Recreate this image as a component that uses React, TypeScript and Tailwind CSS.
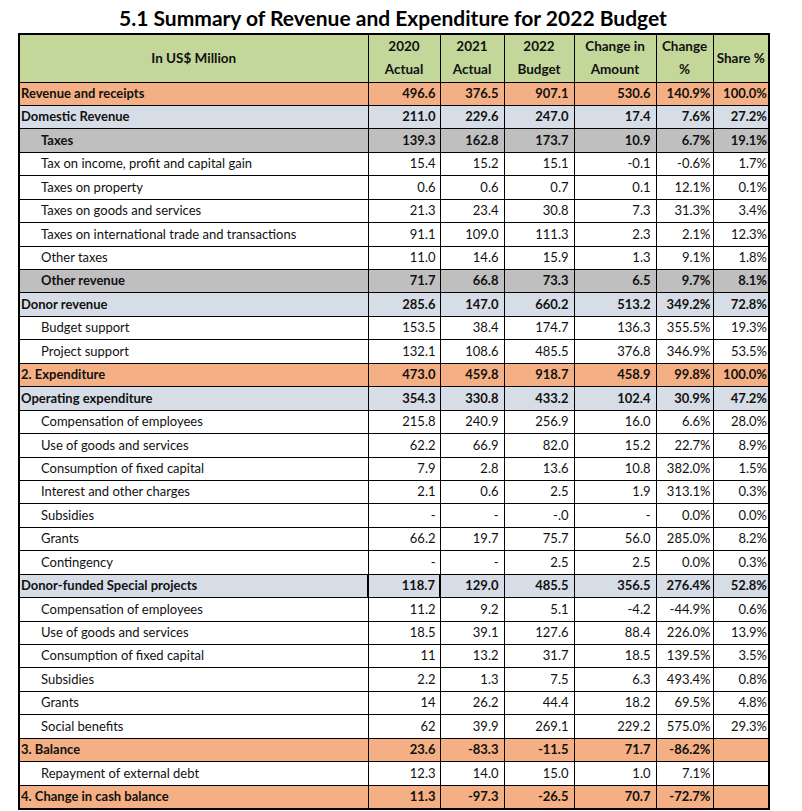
import React from 'react'

type Tone = 'o' | 'b' | 'g' | 'w'

interface Row {
  label: string
  tone: Tone
  indent: boolean
  values: string[]
  thick?: boolean
}

const bold = (label: string, tone: Tone, values: string[], indent = false): Row => ({ label, tone, indent, values })
const item = (label: string, values: string[]): Row => ({ label, tone: 'w', indent: true, values })

const rows: Row[] = [
  bold('Revenue and receipts', 'o', ['496.6', '376.5', '907.1', '530.6', '140.9%', '100.0%']),
  bold('Domestic Revenue', 'b', ['211.0', '229.6', '247.0', '17.4', '7.6%', '27.2%']),
  bold('Taxes', 'g', ['139.3', '162.8', '173.7', '10.9', '6.7%', '19.1%'], true),
  item('Tax on income, profit and capital gain', ['15.4', '15.2', '15.1', '-0.1', '-0.6%', '1.7%']),
  item('Taxes on property', ['0.6', '0.6', '0.7', '0.1', '12.1%', '0.1%']),
  item('Taxes on goods and services', ['21.3', '23.4', '30.8', '7.3', '31.3%', '3.4%']),
  item('Taxes on international trade and transactions', ['91.1', '109.0', '111.3', '2.3', '2.1%', '12.3%']),
  item('Other taxes', ['11.0', '14.6', '15.9', '1.3', '9.1%', '1.8%']),
  bold('Other revenue', 'g', ['71.7', '66.8', '73.3', '6.5', '9.7%', '8.1%'], true),
  bold('Donor revenue', 'b', ['285.6', '147.0', '660.2', '513.2', '349.2%', '72.8%']),
  item('Budget support', ['153.5', '38.4', '174.7', '136.3', '355.5%', '19.3%']),
  item('Project support', ['132.1', '108.6', '485.5', '376.8', '346.9%', '53.5%']),
  bold('2. Expenditure', 'o', ['473.0', '459.8', '918.7', '458.9', '99.8%', '100.0%']),
  bold('Operating expenditure', 'b', ['354.3', '330.8', '433.2', '102.4', '30.9%', '47.2%']),
  item('Compensation of employees', ['215.8', '240.9', '256.9', '16.0', '6.6%', '28.0%']),
  item('Use of goods and services', ['62.2', '66.9', '82.0', '15.2', '22.7%', '8.9%']),
  item('Consumption of fixed capital', ['7.9', '2.8', '13.6', '10.8', '382.0%', '1.5%']),
  item('Interest and other charges', ['2.1', '0.6', '2.5', '1.9', '313.1%', '0.3%']),
  item('Subsidies', ['-', '-', '-.0', '-', '0.0%', '0.0%']),
  item('Grants', ['66.2', '19.7', '75.7', '56.0', '285.0%', '8.2%']),
  item('Contingency', ['-', '-', '2.5', '2.5', '0.0%', '0.3%']),
  { ...bold('Donor-funded Special projects', 'b', ['118.7', '129.0', '485.5', '356.5', '276.4%', '52.8%']), thick: true },
  item('Compensation of employees', ['11.2', '9.2', '5.1', '-4.2', '-44.9%', '0.6%']),
  item('Use of goods and services', ['18.5', '39.1', '127.6', '88.4', '226.0%', '13.9%']),
  item('Consumption of fixed capital', ['11', '13.2', '31.7', '18.5', '139.5%', '3.5%']),
  item('Subsidies', ['2.2', '1.3', '7.5', '6.3', '493.4%', '0.8%']),
  item('Grants', ['14', '26.2', '44.4', '18.2', '69.5%', '4.8%']),
  item('Social benefits', ['62', '39.9', '269.1', '229.2', '575.0%', '29.3%']),
  bold('3. Balance', 'o', ['23.6', '-83.3', '-11.5', '71.7', '-86.2%', '']),
  item('Repayment of external debt', ['12.3', '14.0', '15.0', '1.0', '7.1%', '']),
  bold('4. Change in cash balance', 'o', ['11.3', '-97.3', '-26.5', '70.7', '-72.7%', '']),
]

const toneBg: Record<Tone, string> = {
  o: 'bg-[#f4b084]',
  b: 'bg-[#d7dde6]',
  g: 'bg-[#bfbfbf]',
  w: 'bg-white',
}

// right padding per numeric column, as in the sheet
const padR = ['pr-[4px]', 'pr-[5px]', 'pr-[5px]', 'pr-[5px]', 'pr-[2px]', 'pr-[1px]']

export default function App() {
  return (
    <div className="w-[802px] h-[811px] bg-white text-[#111] overflow-hidden" style={{ fontFamily: 'Lato, "Open Sans", sans-serif' }}>
      <div className="ml-[18px] w-[750px]">
        <h1 className="h-[33px] pt-[5px] text-center text-[21px] font-bold leading-[26px] text-black">
          5.1 Summary of Revenue and Expenditure for 2022 Budget
        </h1>

        <table className="w-[750px] table-fixed border-collapse border-2 border-black text-[13px]">
          <colgroup>
            <col className="w-[349px]" />
            <col className="w-[72px]" />
            <col className="w-[64px]" />
            <col className="w-[70px]" />
            <col className="w-[82px]" />
            <col className="w-[57px]" />
            <col className="w-[56px]" />
          </colgroup>
          <thead>
            <tr className="h-[48px] bg-[#c4d79b] font-bold leading-[23px] text-[13.5px]">
              <th className="border border-black font-bold">In US$ Million</th>
              <th className="border border-black font-bold">2020<br />Actual</th>
              <th className="border border-black font-bold">2021<br />Actual</th>
              <th className="border border-black font-bold">2022<br />Budget</th>
              <th className="border border-black font-bold">Change in<br />Amount</th>
              <th className="border border-black font-bold">Change<br />%</th>
              <th className="border border-black font-bold">Share %</th>
            </tr>
          </thead>
          <tbody>
            {rows.map((row, i) => {
              const isBold = row.tone !== 'w'
              return (
                <tr key={i} className={`h-[23.45px] ${toneBg[row.tone]} ${isBold ? 'font-bold' : ''}`}>
                  <td className={`border border-black whitespace-nowrap p-0 ${row.indent ? 'pl-[21px]' : 'pl-[1px]'} ${row.thick ? 'border-r-2' : ''}`}>
                    {row.label}
                  </td>
                  {row.values.map((v, j) => (
                    <td
                      key={j}
                      className={`border border-black p-0 text-right whitespace-nowrap ${padR[j]} ${row.thick && j === 0 ? 'border-r-2' : ''}`}
                    >
                      {v}
                    </td>
                  ))}
                </tr>
              )
            })}
          </tbody>
        </table>
      </div>
    </div>
  )
}
